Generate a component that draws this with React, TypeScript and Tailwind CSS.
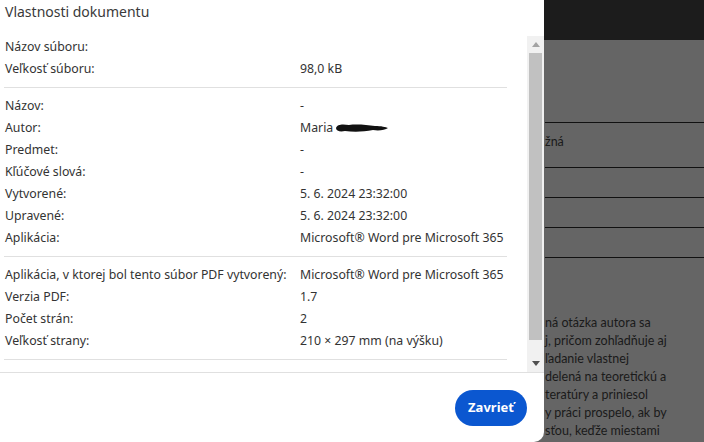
const sections: [string, string][][] = [
  [
    ['Názov súboru:', ''],
    ['Veľkosť súboru:', '98,0 kB'],
  ],
  [
    ['Názov:', '-'],
    ['Autor:', 'author'],
    ['Predmet:', '-'],
    ['Kľúčové slová:', '-'],
    ['Vytvorené:', '5. 6. 2024 23:32:00'],
    ['Upravené:', '5. 6. 2024 23:32:00'],
    ['Aplikácia:', 'Microsoft® Word pre Microsoft 365'],
  ],
  [
    ['Aplikácia, v ktorej bol tento súbor PDF vytvorený:', 'Microsoft® Word pre Microsoft 365'],
    ['Verzia PDF:', '1.7'],
    ['Počet strán:', '2'],
    ['Veľkosť strany:', '210 × 297 mm (na výšku)'],
  ],
];

const docLines = [
  'ná otázka autora sa',
  'j, pričom zohľadňuje aj',
  'ľadanie vlastnej',
  'delená na teoretickú a',
  'teratúry a priniesol',
  'y práci prospelo, ak by',
  'sťou, keďže miestami',
];

function Author() {
  return (
    <span className="flex items-center">
      Maria
      <svg width="54" height="10" viewBox="0 0 54 10" className="ml-[2px]">
        <path
          d="M1 5 C2 1 8 1 14 2 C22 1 32 2 40 3 C46 3 51 4 53 5 C50 7 44 8 38 7 C28 9 18 9 10 8 C5 9 1 8 1 5 Z"
          fill="#111"
        />
      </svg>
    </span>
  );
}

export default function App() {
  return (
    <div className="relative h-[442px] w-[704px] overflow-hidden bg-[#656565]">
      {/* document behind the dialog */}
      <div className="h-10 bg-[#1c1c1c]" />
      <div
        className="pl-[545px] text-[12.5px] text-[#1a1a1a]"
        style={{ fontFamily: 'Lato, "Open Sans", sans-serif' }}
      >
        <div className="mt-[82px] flex h-[45px] items-center border-t border-[#111] pb-[6px]">žná</div>
        <div className="h-[30px] border-t border-[#111]" />
        <div className="h-[30px] border-t border-[#111]" />
        <div className="h-[30px] border-t border-[#111]" />
        <div className="border-t border-[#111]" />
        <div className="mt-[56px] flex flex-col whitespace-nowrap leading-[18px]">
          {docLines.map((l) => (
            <div key={l}>{l}</div>
          ))}
        </div>
      </div>

      {/* dialog */}
      <div
        className="absolute left-0 top-0 flex h-[442px] w-[544px] flex-col rounded-br-[10px] bg-white text-[#333]"
        style={{ fontFamily: '"Noto Sans", "Open Sans", sans-serif' }}
      >
        <div className="h-[36px] px-[5px] pt-[2px] text-[14px] leading-[20px] text-[#3a3a3a]">
          Vlastnosti dokumentu
        </div>
        <div className="flex h-[337px] border-b border-[#e0e0e0]">
          <div className="min-w-0 flex-1 pl-[4px] pr-[20px] text-[12.3px]">
            {sections.map((rows, i) => (
              <div
                key={i}
                className={`border-b border-[#e0e0e0] pb-[7px] ${i === 0 ? 'pt-0' : 'pt-[7px]'}`}
              >
                {rows.map(([label, value]) => (
                  <div key={label} className="flex h-[22px] items-center whitespace-nowrap">
                    <div className="w-[296px] shrink-0 pl-px">{label}</div>
                    <div>{value === 'author' ? <Author /> : value}</div>
                  </div>
                ))}
              </div>
            ))}
          </div>
          <div className="flex w-[17px] flex-col bg-[#f1f1f1]">
            <div className="flex h-[17px] items-center justify-center">
              <svg width="8" height="5" viewBox="0 0 8 5">
                <path d="M0 5 L4 0 L8 5 Z" fill="#a3a3a3" />
              </svg>
            </div>
            <div className="mx-[2px] h-[287px] bg-[#c1c1c1]" />
            <div className="flex-1" />
            <div className="flex h-[17px] items-center justify-center">
              <svg width="8" height="5" viewBox="0 0 8 5">
                <path d="M0 0 L8 0 L4 5 Z" fill="#505050" />
              </svg>
            </div>
          </div>
        </div>
        <div className="flex justify-end pr-[17px] pt-[17px]">
          <button
            type="button"
            className="h-[36px] w-[72px] rounded-full bg-[#0b57d0] text-[13px] font-bold text-white"
          >
            Zavrieť
          </button>
        </div>
      </div>
    </div>
  );
}
